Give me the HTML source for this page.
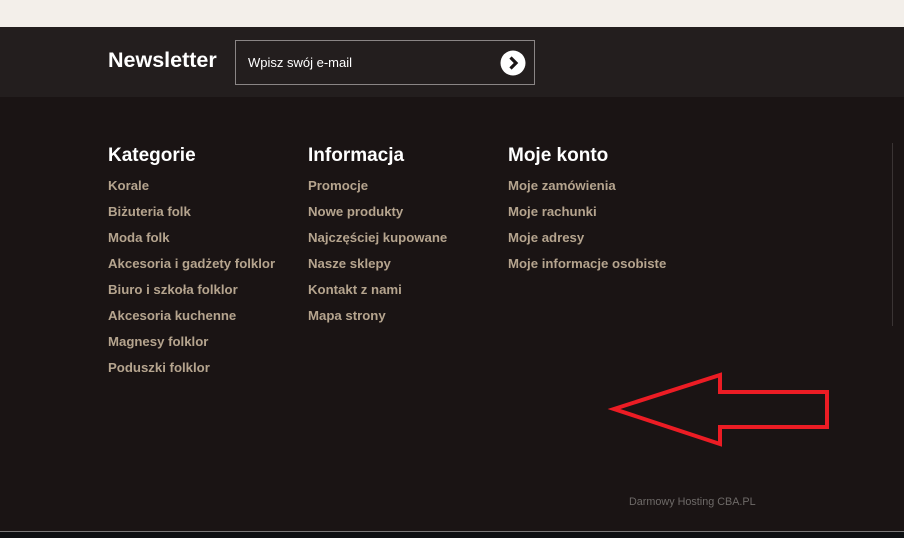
<!DOCTYPE html>
<html><head><meta charset="utf-8"><style>
body{margin:0;width:904px;height:538px;overflow:hidden;background:#1a1414;font-family:"Liberation Sans",sans-serif;position:relative}
.top{position:absolute;left:0;top:0;width:904px;height:27px;background:#f3efea}
.band{position:absolute;left:0;top:27px;width:904px;height:70px;background:#231e1e}
.nl{position:absolute;left:108px;top:48px;color:#fff;font-weight:bold;font-size:21.5px}
.inp{position:absolute;left:235px;top:40px;width:298px;height:43px;border:1px solid #8a8585;box-sizing:content-box}
.inp span{position:absolute;left:12px;top:14px;color:#fff;font-size:13px}
.col{position:absolute;top:145px}
.col h3{margin:0 0 10px;color:#fff;font-size:19px;font-weight:bold;height:22px}
.col a{display:block;color:#b5a48e;font-size:13.2px;font-weight:bold;height:26px;line-height:17px;text-decoration:none}
.vl{position:absolute;left:892px;top:143px;width:1px;height:183px;background:#3a3434}
.foot{position:absolute;left:629px;top:496px;color:#6e6a68;font-size:10.8px}
.bl{position:absolute;left:0;top:531px;width:904px;height:1px;background:#7a7878}
.bb{position:absolute;left:0;top:532px;width:904px;height:6px;background:#0d0f12}
</style></head><body>
<div class="top"></div>
<div class="band"></div>
<div class="nl">Newsletter</div>
<div class="inp"><span>Wpisz swój e-mail</span>
<svg style="position:absolute;left:264px;top:9px" width="26" height="26" viewBox="0 0 26 26"><circle cx="13" cy="13" r="12.5" fill="#fff"/><path d="M10.5 7.5 L16 13 L10.5 18.5" fill="none" stroke="#1a1414" stroke-width="3.2"/></svg></div>
<div class="col" style="left:108px"><h3>Kategorie</h3>
<a>Korale</a><a>Biżuteria folk</a><a>Moda folk</a><a>Akcesoria i gadżety folklor</a><a>Biuro i szkoła folklor</a><a>Akcesoria kuchenne</a><a>Magnesy folklor</a><a>Poduszki folklor</a></div>
<div class="col" style="left:308px"><h3>Informacja</h3>
<a>Promocje</a><a>Nowe produkty</a><a>Najczęściej kupowane</a><a>Nasze sklepy</a><a>Kontakt z nami</a><a>Mapa strony</a></div>
<div class="col" style="left:508px"><h3>Moje konto</h3>
<a>Moje zamówienia</a><a>Moje rachunki</a><a>Moje adresy</a><a>Moje informacje osobiste</a></div>
<div class="vl"></div>
<svg style="position:absolute;left:0;top:0" width="904" height="538"><path d="M614 409 L720 375 L720 392 L827 392 L827 427 L720 427 L720 444 Z" fill="none" stroke="#ec1c24" stroke-width="4" stroke-linejoin="miter"/></svg>
<div class="foot">Darmowy Hosting CBA.PL</div>
<div class="bl"></div><div class="bb"></div>
</body></html>
